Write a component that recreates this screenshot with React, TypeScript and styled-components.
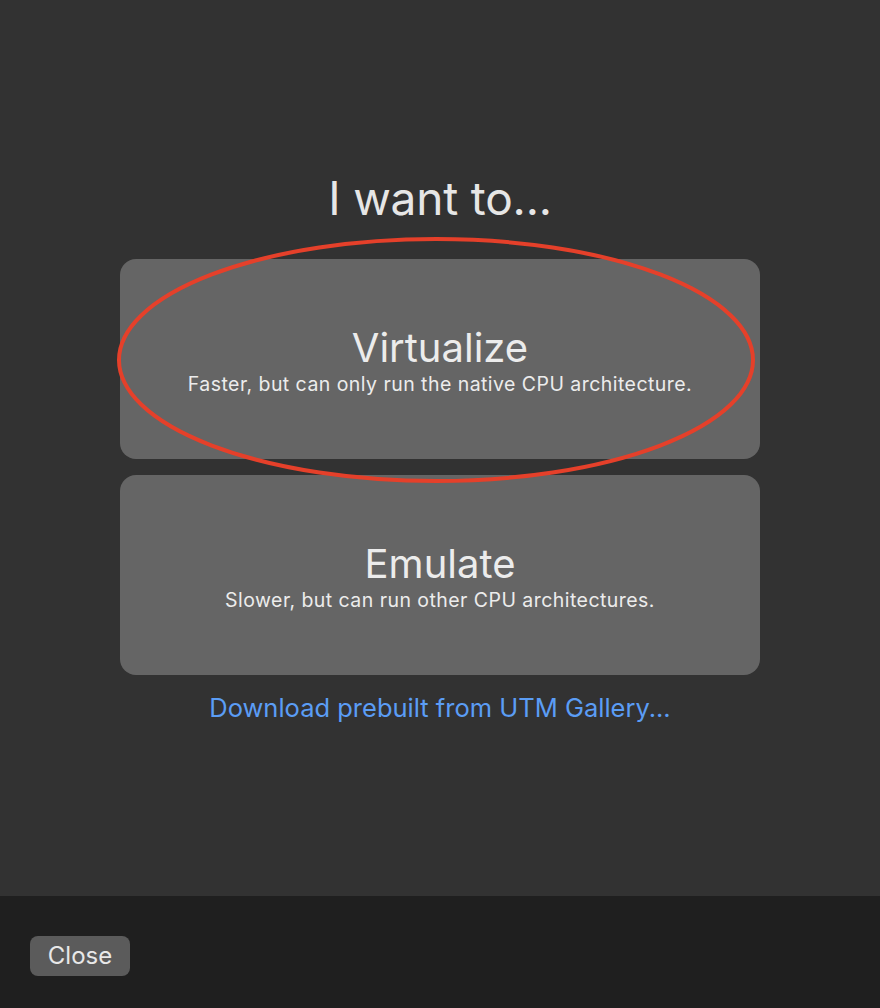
import React from "react";
import styled, { createGlobalStyle } from "styled-components";

const Global = createGlobalStyle`
  html, body { margin: 0; padding: 0; background: #323232; }
  body { font-family: Inter, "Noto Sans", sans-serif; -webkit-font-smoothing: antialiased; }
`;

const Window = styled.div`
  width: 880px;
  height: 1008px;
  display: flex;
  flex-direction: column;
  background: #323232;
`;

const Main = styled.main`
  height: 896px;
  display: flex;
  flex-direction: column;
  align-items: center;
  padding-top: 168px;
  box-sizing: border-box;
`;

const Title = styled.h1`
  margin: 0 0 31px;
  font-size: 46px;
  line-height: 60px;
  font-weight: 400;
  color: #e6e6e6;
  letter-spacing: -0.2px;
`;

const Choices = styled.div`
  position: relative;
  display: flex;
  flex-direction: column;
  gap: 16px;
`;

const Card = styled.button`
  width: 640px;
  height: 200px;
  border: none;
  border-radius: 16px;
  background: #656565;
  display: flex;
  flex-direction: column;
  align-items: center;
  justify-content: center;
  padding: 2px 0 0;
  color: #ececec;
  font-family: inherit;
  cursor: pointer;
`;

const CardTitle = styled.span`
  font-size: 40px;
  line-height: 48px;
  font-weight: 400;
`;

const CardSub = styled.span`
  font-size: 19.5px;
  line-height: 24px;
  font-weight: 400;
  letter-spacing: 0.45px;
`;

const Link = styled.a`
  margin-top: 18px;
  font-size: 25.5px;
  line-height: 30px;
  color: #5b9df5;
  text-decoration: none;
`;

const Annotation = styled.svg`
  position: absolute;
  left: -4px;
  top: -22px;
  width: 640px;
  height: 246px;
  overflow: visible;
  pointer-events: none;
`;

const Footer = styled.footer`
  flex: 1;
  background: #1f1f1f;
  display: flex;
  align-items: flex-start;
  padding: 40px 0 0 30px;
`;

const CloseButton = styled.button`
  width: 100px;
  height: 40px;
  border: none;
  border-radius: 8px;
  background: #5b5b5b;
  color: #e8e8e8;
  font-family: inherit;
  font-size: 24px;
  line-height: 40px;
  padding: 0;
  cursor: pointer;
`;

export default function App() {
  return (
    <Window>
      <Global />
      <Main>
        <Title>I want to...</Title>
        <Choices>
          <Card>
            <CardTitle>Virtualize</CardTitle>
            <CardSub>Faster, but can only run the native CPU architecture.</CardSub>
          </Card>
          <Card>
            <CardTitle>Emulate</CardTitle>
            <CardSub>Slower, but can run other CPU architectures.</CardSub>
          </Card>
          <Annotation viewBox="0 0 640 246">
            <ellipse cx="320" cy="123" rx="317" ry="121" fill="none" stroke="#e5402a" strokeWidth="4" />
          </Annotation>
        </Choices>
        <Link href="#">Download prebuilt from UTM Gallery...</Link>
      </Main>
      <Footer>
        <CloseButton>Close</CloseButton>
      </Footer>
    </Window>
  );
}
